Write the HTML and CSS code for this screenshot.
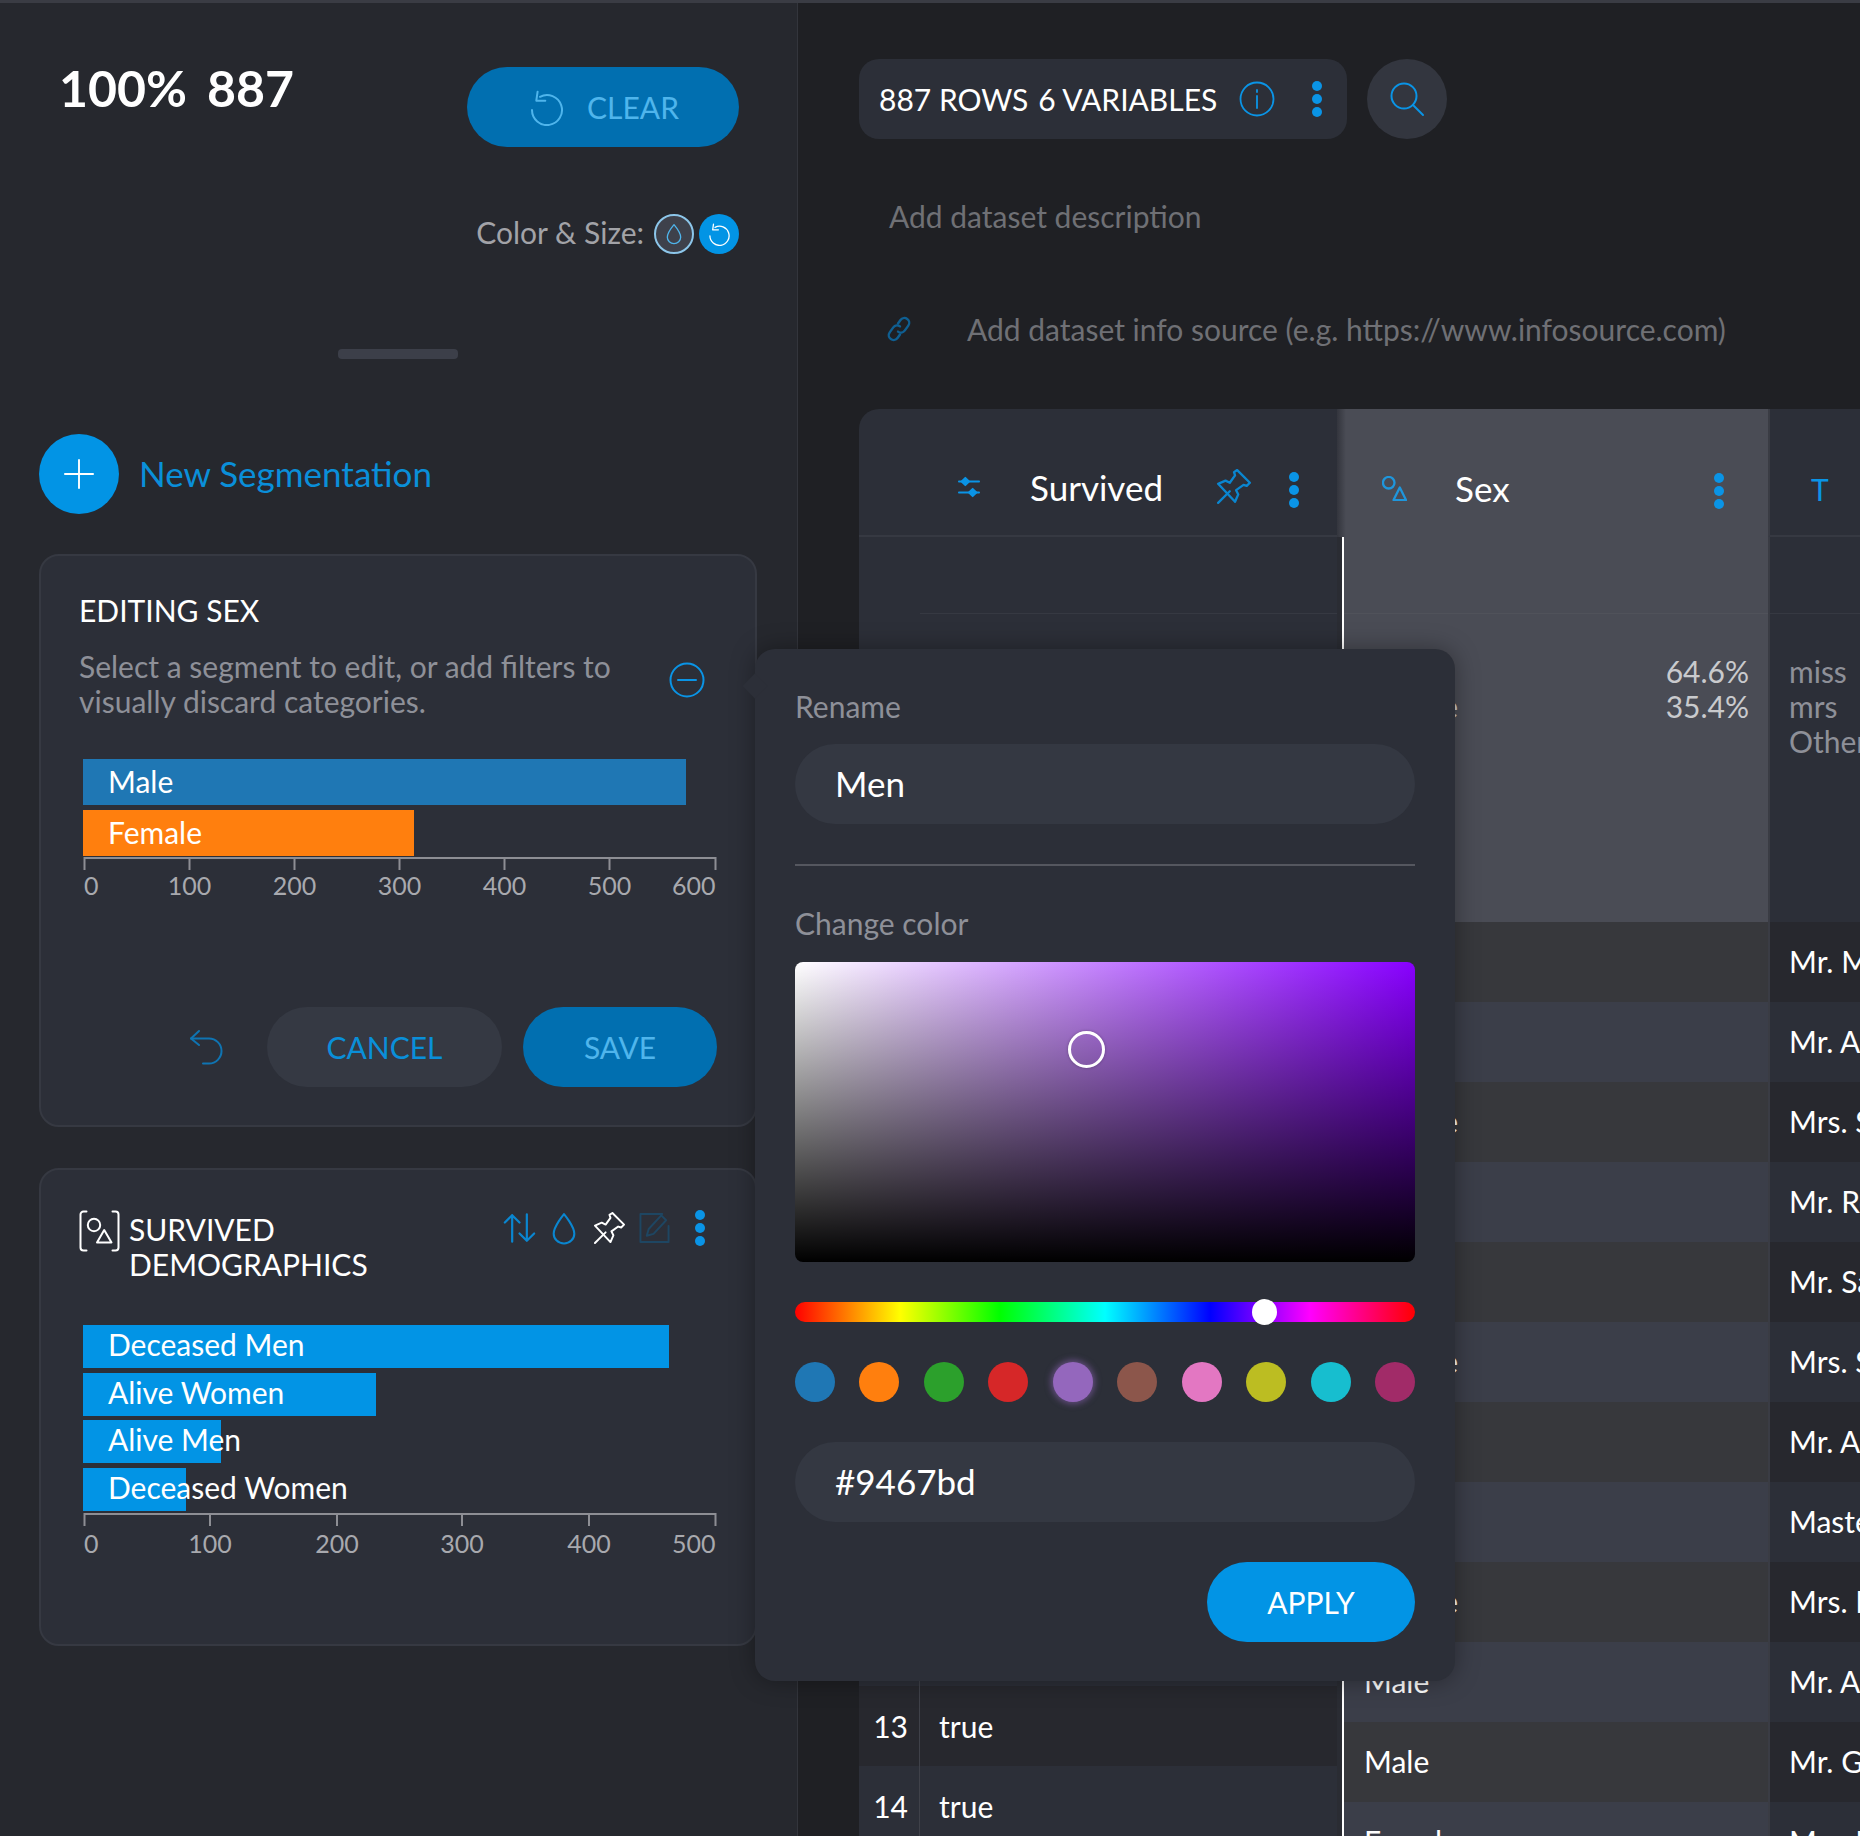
FILE: index.html
```html
<!DOCTYPE html>
<html lang="en">
<head>
<meta charset="utf-8">
<title>Dataset segmentation</title>
<link rel="stylesheet" href="styles.css">
</head>
<body>
<svg class="sprite" xmlns="http://www.w3.org/2000/svg">
  <symbol id="reset" viewBox="0 0 36 36"><path d="M11 6.800A15 15 0 1 1 3 20"/><path d="M8.600 1.700 7.300 10.700H16.300"/></symbol>
  <symbol id="undo" viewBox="0 0 36 36"><path d="M10 2 2 9.500 10 16"/><path d="M2 9.500h18a12.500 12.500 0 0 1 0 25h-6"/></symbol>
  <symbol id="drop" viewBox="0 0 24 32"><path d="M12 2C12 2 2 14 2 21a10 9.500 0 0 0 20 0C22 14 12 2 12 2Z"/></symbol>
  <symbol id="plus" viewBox="0 0 32 32"><path d="M16 1v30M1 16h30"/></symbol>
  <symbol id="minus" viewBox="0 0 36 36"><circle cx="18" cy="18" r="16.500"/><path d="M9 18h18"/></symbol>
  <symbol id="info" viewBox="0 0 36 36"><circle cx="18" cy="18" r="16.500"/><path d="M18 15v12M18 9v2"/></symbol>
  <symbol id="search" viewBox="0 0 36 36"><circle cx="15" cy="15" r="12.500"/><path d="m24 24 10 10"/></symbol>
  <symbol id="link" viewBox="0 0 24 28"><path d="M11 8.500 13.500 5a4.800 4.800 0 0 1 7.800 5.600l-3.600 5a4.800 4.800 0 0 1-6.700 1"/><path d="M13 19.500 10.500 23a4.800 4.800 0 0 1-7.800-5.600l3.600-5a4.800 4.800 0 0 1 6.700-1"/></symbol>
  <symbol id="pin" viewBox="0 0 34 34"><path d="M2 32 13 21"/><path d="M2 14 9 11l4 2 5-7-1-3 3-2 12 12-3 3-3-1-7 5 2 4-3 7Z"/></symbol>
  <symbol id="sort" viewBox="0 0 36 32"><path d="M10 31V2M2 10l8-8 8 8"/><path d="M26 1v29M18 22l8 8 8-8"/></symbol>
  <symbol id="edit" viewBox="0 0 32 32"><path d="M24 1.500H1.500v29h29V14"/><path d="M8 24l2-7L23 3l5 5-13 14Z"/></symbol>
  <symbol id="dots" viewBox="0 0 10 36"><circle cx="5" cy="5" r="5"/><circle cx="5" cy="18" r="5"/><circle cx="5" cy="31" r="5"/></symbol>
  <symbol id="sliders" viewBox="0 0 24 24"><path d="M1 6h22M1 18h22"/><path class="solid" d="m8 2 4 4-4 4-4-4ZM16 14l4 4-4 4-4-4Z"/></symbol>
  <symbol id="shapes" viewBox="0 0 26 26"><circle cx="7" cy="7" r="6"/><path d="M18.500 12 25 25H12Z"/></symbol>
  <symbol id="bracket" viewBox="0 0 40 42"><path d="M7 1.500H4a3 3 0 0 0-3 3v33a3 3 0 0 0 3 3h3M33 1.500h3a3 3 0 0 1 3 3v33a3 3 0 0 1-3 3h-3"/><circle cx="14.500" cy="15" r="6.200"/><path d="M24.700 20 32 32.500H17.500Z"/></symbol>
</svg>

<div class="app">
  <aside class="left">
    <div class="summary">
      <div class="count"><span>100%</span><span>887</span></div>
      <button class="btn btn-dim clear"><svg class="ic ic-reset"><use href="#reset"/></svg>CLEAR</button>
    </div>

    <div class="color-size">
      <span class="color-label">Color &amp; Size:</span>
      <span class="round round-drop"><svg class="ic ic-drop-sm"><use href="#drop"/></svg></span>
      <span class="round round-reset"><svg class="ic ic-reset-sm"><use href="#reset"/></svg></span>
    </div>

    <div class="handle"></div>

    <div class="new-seg">
      <span class="plus"><svg class="ic ic-plus"><use href="#plus"/></svg></span>
      <span class="new-seg-label">New Segmentation</span>
    </div>

    <section class="card card-edit">
      <h2 class="card-title">EDITING SEX</h2>
      <div class="desc-row">
        <p class="desc">Select a segment to edit, or add filters to<br>visually discard categories.</p>
        <svg class="ic ic-minus"><use href="#minus"/></svg>
      </div>
      <div class="chart chart-edit">
        <div class="bar bar-edit bar-male" style="width:603px">Male</div>
        <div class="bar bar-edit bar-female" style="width:331px">Female</div>
        <svg class="axis" width="640" height="64" viewBox="0 0 640 64">
          <path class="axis-line" d="M1.500 14V2H632.500V14M106.500 2V14M211.500 2V14M316.500 2V14M421.500 2V14M526.500 2V14"/>
          <text x="1" y="39">0</text>
          <text class="mid" x="106.500" y="39">100</text>
          <text class="mid" x="211.500" y="39">200</text>
          <text class="mid" x="316.500" y="39">300</text>
          <text class="mid" x="421.500" y="39">400</text>
          <text class="mid" x="526.500" y="39">500</text>
          <text class="end" x="632.500" y="39">600</text>
        </svg>
      </div>
      <div class="actions">
        <svg class="ic ic-undo"><use href="#undo"/></svg>
        <button class="btn btn-quiet cancel">CANCEL</button>
        <button class="btn btn-dim save">SAVE</button>
      </div>
    </section>

    <section class="card card-demo">
      <div class="demo-head">
        <svg class="ic ic-bracket"><use href="#bracket"/></svg>
        <h2 class="card-title demo-title">SURVIVED<br>DEMOGRAPHICS</h2>
        <div class="demo-tools">
          <svg class="ic ic-sort"><use href="#sort"/></svg>
          <svg class="ic ic-drop"><use href="#drop"/></svg>
          <svg class="ic ic-pin-w"><use href="#pin"/></svg>
          <svg class="ic ic-edit"><use href="#edit"/></svg>
          <svg class="ic ic-dots"><use href="#dots"/></svg>
        </div>
      </div>
      <div class="chart chart-demo">
        <div class="bar bar-demo" style="width:586px">Deceased Men</div>
        <div class="bar bar-demo" style="width:293px">Alive Women</div>
        <div class="bar bar-demo" style="width:138px">Alive Men</div>
        <div class="bar bar-demo" style="width:103px">Deceased Women</div>
        <svg class="axis" width="640" height="60" viewBox="0 0 640 60">
          <path class="axis-line" d="M1.500 15V3H632.500V15M127 3V15M254 3V15M379 3V15M506 3V15"/>
          <text x="1" y="42">0</text>
          <text class="mid" x="127" y="42">100</text>
          <text class="mid" x="254" y="42">200</text>
          <text class="mid" x="379" y="42">300</text>
          <text class="mid" x="506" y="42">400</text>
          <text class="end" x="632.500" y="42">500</text>
        </svg>
      </div>
    </section>
  </aside>

  <main class="right">
    <div class="topbar">
      <div class="chip">
        <span>887 ROWS</span><span>6 VARIABLES</span>
        <svg class="ic ic-info"><use href="#info"/></svg>
        <svg class="ic ic-dots chip-dots"><use href="#dots"/></svg>
      </div>
      <span class="search"><svg class="ic ic-search"><use href="#search"/></svg></span>
    </div>
    <p class="meta meta-desc">Add dataset description</p>
    <div class="meta meta-source"><svg class="ic ic-link"><use href="#link"/></svg><span>Add dataset info source (e.g. https://www.infosource.com)</span></div>

    <div class="table">
      <div class="col col-a">
        <div class="head head-a">
          <svg class="ic ic-sliders"><use href="#sliders"/></svg>
          <span class="head-name">Survived</span>
          <svg class="ic ic-pin"><use href="#pin"/></svg>
          <svg class="ic ic-dots"><use href="#dots"/></svg>
        </div>
        <div class="stats stats-a"><div class="stats-gap"></div></div>
        <div class="row"><span class="idx">1</span><span>false</span></div>
        <div class="row"><span class="idx">2</span><span>true</span></div>
        <div class="row"><span class="idx">3</span><span>true</span></div>
        <div class="row"><span class="idx">4</span><span>true</span></div>
        <div class="row"><span class="idx">5</span><span>false</span></div>
        <div class="row"><span class="idx">6</span><span>false</span></div>
        <div class="row"><span class="idx">7</span><span>false</span></div>
        <div class="row"><span class="idx">8</span><span>false</span></div>
        <div class="row"><span class="idx">9</span><span>true</span></div>
        <div class="row"><span class="idx">10</span><span>true</span></div>
        <div class="row"><span class="idx">11</span><span>true</span></div>
        <div class="row"><span class="idx">12</span><span>true</span></div>
        <div class="row"><span class="idx">13</span><span>true</span></div>
        <div class="row"><span class="idx">14</span><span>true</span></div>
      </div>

      <div class="col col-sex">
        <div class="head head-sex">
          <svg class="ic ic-shapes"><use href="#shapes"/></svg>
          <span class="head-name">Sex</span>
          <svg class="ic ic-dots"><use href="#dots"/></svg>
        </div>
        <div class="sex-body">
          <div class="stats stats-sex">
            <div class="stats-gap"></div>
            <div class="freq"><span>Male</span><span>64.6%</span></div>
            <div class="freq"><span>Female</span><span>35.4%</span></div>
          </div>
          <div class="row">Male</div>
          <div class="row">Male</div>
          <div class="row">Female</div>
          <div class="row">Male</div>
          <div class="row">Male</div>
          <div class="row">Female</div>
          <div class="row">Male</div>
          <div class="row">Male</div>
          <div class="row">Female</div>
          <div class="row">Male</div>
          <div class="row">Male</div>
          <div class="row">Female</div>
        </div>
      </div>

      <div class="col col-title">
        <div class="head head-title"><span class="type-t">T</span></div>
        <div class="stats stats-title">
          <div class="stats-gap"></div>
          <div class="freq">miss</div>
          <div class="freq">mrs</div>
          <div class="freq">Other</div>
        </div>
        <div class="row">Mr. Michael</div>
        <div class="row">Mr. Anders</div>
        <div class="row">Mrs. Sarah</div>
        <div class="row">Mr. Robert</div>
        <div class="row">Mr. Samuel</div>
        <div class="row">Mrs. Susan</div>
        <div class="row">Mr. Arthur</div>
        <div class="row">Master</div>
        <div class="row">Mrs. Ida</div>
        <div class="row">Mr. Albert</div>
        <div class="row">Mr. George</div>
        <div class="row">Mrs. Mary</div>
      </div>
    </div>
  </main>

  <div class="popover">
    <label class="pop-label">Rename</label>
    <div class="field field-name">Men</div>
    <hr class="pop-rule">
    <label class="pop-label">Change color</label>
    <div class="picker"><span class="picker-cursor"></span></div>
    <div class="hue"><span class="hue-thumb"></span></div>
    <div class="swatches">
      <span class="sw sw-1"></span><span class="sw sw-2"></span><span class="sw sw-3"></span><span class="sw sw-4"></span><span class="sw sw-5"></span><span class="sw sw-6"></span><span class="sw sw-7"></span><span class="sw sw-8"></span><span class="sw sw-9"></span><span class="sw sw-10"></span>
    </div>
    <div class="field field-hex">#9467bd</div>
    <div class="pop-actions"><button class="btn btn-primary apply">APPLY</button></div>
  </div>
</div>
</body>
</html>
```

FILE: styles.css
```css
* { box-sizing: border-box; }
html, body { margin: 0; height: 100%; }
body {
  width: 1860px;
  height: 1836px;
  overflow: hidden;
  background: #1f2024;
  color: #fff;
  font-family: Lato, "Open Sans", sans-serif;
  font-size: 30px;
}
.sprite { display: none; }
.ic { display: block; flex: none; fill: none; stroke: currentColor; stroke-width: 2; stroke-linecap: round; stroke-linejoin: round; }
h2, p { margin: 0; font-weight: 400; }
button { font: inherit; border: 0; cursor: pointer; }

.app { position: relative; display: flex; height: 1836px; border-top: 3px solid #3a3c44; overflow: hidden; }

/* left panel */
.left { flex: none; width: 798px; padding: 64px 41px 0 39px; background: #26282e; border-right: 1px solid #33353c; }
.summary { display: flex; justify-content: space-between; align-items: flex-start; padding: 0 17px 0 20px; }
.count { display: flex; gap: 20px; margin-top: -1px; font-size: 50px; font-weight: 700; line-height: 44px; }
.btn { display: flex; align-items: center; justify-content: center; height: 80px; padding-bottom: 2px; border-radius: 40px; font-size: 30px; }
.btn-dim { background: #016fb0; color: #4fb5ec; }
.btn-quiet { background: #353943; color: #0a8fd9; }
.btn-primary { background: #0294e5; color: #fff; }
.clear { width: 272px; gap: 22px; }
.ic-reset { width: 36px; height: 36px; margin: 2px 0 0 2px; }

.color-size { display: flex; align-items: center; justify-content: flex-end; gap: 5px; margin-top: 67px; padding-right: 17px; color: #a2a3a8; }
.color-label { margin: 0 5px 5px 0; line-height: 30px; }
.round { display: flex; align-items: center; justify-content: center; width: 40px; height: 40px; border-radius: 50%; }
.round-drop { background: #3e414b; border: 2px solid #8cc6ea; color: #4fb5ec; }
.round-reset { background: #0294e5; color: #fff; }
.ic-drop-sm { width: 16px; height: 22px; }
.ic-reset-sm { width: 23px; height: 23px; }

.handle { width: 120px; height: 10px; margin: 95px auto 0; border-radius: 4px; background: #3c3f49; }

.new-seg { display: flex; align-items: center; gap: 20px; margin-top: 75px; color: #0a8fd9; font-size: 35px; }
.new-seg-label { margin-bottom: 2px; }
.plus { display: flex; align-items: center; justify-content: center; width: 80px; height: 80px; border-radius: 50%; background: #0294e5; color: #fff; }
.ic-plus { width: 30px; height: 30px; }

.card { width: 718px; background: #2c2f38; border: 2px solid #363942; border-radius: 20px; padding: 0 38px; }
.card-edit { height: 573px; margin-top: 40px; padding-top: 37px; }
.card-demo { height: 478px; margin-top: 41px; padding-top: 42px; }
.card-title { font-size: 30px; line-height: 35px; }
.desc-row { display: flex; justify-content: space-between; align-items: flex-start; margin-top: 21px; padding-right: 12px; }
.desc { color: #8e9098; line-height: 35px; }
.ic-minus { width: 36px; height: 36px; margin-top: 13px; color: #0a94e6; }

.chart { margin-left: 4px; }
.chart-edit { margin-top: 40px; }
.chart-demo { margin-top: 43px; }
.bar { display: flex; align-items: center; padding-left: 25px; white-space: nowrap; color: #fff; }
.bar-edit { height: 46px; margin-bottom: 5px; padding-bottom: 2px; }
.bar-male { background: #1f77b4; }
.bar-female { background: #ff7f0e; margin-bottom: 0; }
.bar-demo { height: 43px; margin-bottom: 4.670px; padding-bottom: 5px; background: #0294e5; }
.bar-demo:nth-child(4) { margin-bottom: 0; }
.axis { display: block; }
.axis text { fill: #a8a9ae; font-family: Lato, sans-serif; font-size: 25px; }
.axis .mid { text-anchor: middle; }
.axis .end { text-anchor: end; }
.axis-line { fill: none; stroke: #8d8e94; stroke-width: 2; }

.actions { display: flex; align-items: center; justify-content: flex-end; margin-top: 87px; }
.ic-undo { width: 36px; height: 36px; margin-right: 42px; color: #0f74b2; }
.cancel { width: 235px; margin-right: 21px; }
.save { width: 194px; }

.demo-head { display: flex; align-items: flex-start; }
.ic-bracket { width: 41px; height: 42px; margin: -2px 9px 0 0; }
.demo-title { flex: 1; }
.demo-tools { display: flex; align-items: center; margin-top: -2px; padding-right: 12px; color: #0a86d0; }
.ic-sort { width: 33px; height: 32px; stroke-width: 2.400; }
.ic-drop { width: 26px; height: 33px; margin-left: 15px; }
.ic-pin-w { width: 33px; height: 33px; margin-left: 16px; color: #fff; }
.ic-edit { width: 31px; height: 32px; margin-left: 13px; color: #1e4662; }
.ic-dots { width: 10px; height: 36px; fill: #0a94e6; stroke: none; }
.demo-tools .ic-dots { margin-left: 25px; }

/* right panel */
.right { flex: 1; min-width: 0; padding: 56px 0 0 61px; overflow: hidden; }
.topbar { display: flex; gap: 20px; }
.chip { display: flex; align-items: center; width: 488px; height: 80px; padding: 0 0 0 20px; border-radius: 20px; background: #2c2f38; }
.chip span + span { margin-left: 10px; }
.ic-info { width: 36px; height: 36px; margin-left: 22px; color: #0a94e6; stroke-width: 1.800; }
.chip-dots { margin-left: 37px; }
.search { display: flex; align-items: center; justify-content: center; width: 80px; height: 80px; border-radius: 50%; background: #33363f; }
.ic-search { width: 36px; height: 36px; color: #0a94e6; }
.meta { color: #6f7075; line-height: 36px; }
.meta-desc { margin-top: 59px; padding-left: 30px; }
.meta-source { display: flex; align-items: center; margin-top: 77px; padding-left: 28px; }
.ic-link { width: 24px; height: 28px; margin-right: 56px; color: #0f5f92; stroke-width: 2.400; }

.table { display: flex; width: 1010px; margin-top: 62px; }
.col { flex: none; }
.col-a { width: 478px; background: #2c2f38; border-top-left-radius: 20px; }
.col-sex { width: 431px; background: #2a2c33; }
.col-title { width: 302px; background: #2c2f38; }
.head { display: flex; align-items: center; height: 128px; padding-top: 30px; }
.head-name { font-size: 35px; }
.head-a { border-bottom: 2px solid #363942; padding-left: 99px; }
.ic-sliders { width: 22px; height: 22px; color: #0a94e6; }
.solid { fill: currentColor; }
.head-a .head-name { margin-left: 50px; width: 186px; }
.ic-pin { width: 36px; height: 36px; color: #0a86d0; stroke-width: 2.200; }
.head-a .ic-dots { margin: 6px 0 0 37px; }
.head-sex { padding-left: 45px; background: linear-gradient(to right, #33353d, #4a4c55 9px); }
.head-sex .ic-dots { margin-top: 6px; }
.ic-shapes { width: 25px; height: 25px; color: #1f96dc; stroke-width: 2.400; }
.head-sex .head-name { margin-left: 48px; width: 259px; }
.head-title { padding-left: 41px; border-left: 2px solid #3a3c44; border-bottom: 2px solid #363942; }
.type-t { margin-top: 4px; color: #0a94e6; }

.stats-gap { height: 77px; border-bottom: 1px solid #363942; margin-bottom: 40px; }
.stats-a { height: 189px; padding-left: 61px; }
.sex-body { margin-left: 5px; border-left: 2px solid #fff; }
.stats-sex { height: 385px; background: #4a4c55; }
.stats-sex .stats-gap { border-color: #50525a; }
.stats-title { height: 385px; border-left: 2px solid #3a3c44; }
.freq { display: flex; justify-content: space-between; line-height: 35px; color: #8e9098; padding: 0 19px 0 20px; }
.stats-title .freq { padding: 0 19px; white-space: nowrap; }
.stats-sex .freq { color: #c9cacd; }

.row { display: flex; align-items: center; height: 80px; white-space: nowrap; }
.col-a .row:nth-child(even) { background: #2c2f38; }
.col-a .row:nth-child(odd) { background: #27282e; }
.idx { width: 61px; height: 100%; line-height: 80px; padding-right: 11px; margin-right: 19px; text-align: right; border-right: 1px solid #3f4149; }
.sex-body .row { padding: 0 0 2px 20px; background: #3b3e49; }
.sex-body .row:nth-child(even) { background: #37383c; }
.col-title .row { padding: 0 0 2px 19px; background: #2c2f38; border-left: 2px solid #3a3c44; }
.col-title .row:nth-child(odd) { background: #27282e; }

/* popover */
.popover {
  position: absolute;
  left: 755px;
  top: 646px;
  width: 700px;
  height: 1032px;
  padding: 39px 40px 0;
  border-radius: 20px;
  background: #2c2f38;
  box-shadow: 0 0 24px rgba(0,0,0,.35);
}
.popover::before {
  content: "";
  position: absolute;
  left: -9px;
  top: 28px;
  width: 18px;
  height: 18px;
  background: #2c2f38;
  transform: rotate(45deg);
}
.pop-label { display: block; line-height: 36px; color: #8e9098; }
.field { display: flex; align-items: center; width: 100%; height: 80px; padding: 0 0 2px 40px; border-radius: 40px; background: #343842; font-size: 35px; }
.field-name { margin-top: 20px; }
.pop-rule { height: 2px; margin: 40px 0 39px; border: 0; background: #55575f; }
.picker {
  position: relative;
  height: 300px;
  margin-top: 21px;
  border-radius: 8px;
  background:
    linear-gradient(to top, #000, rgba(0,0,0,0)),
    linear-gradient(to right, #fff, #8800ff);
}
.picker-cursor {
  position: absolute;
  left: 273px;
  top: 69px;
  width: 37px;
  height: 37px;
  border: 3px solid #fff;
  border-radius: 50%;
  box-shadow: 0 0 3px rgba(0,0,0,.3);
}
.hue {
  position: relative;
  height: 20px;
  margin-top: 40px;
  border-radius: 10px;
  background: linear-gradient(to right, #f00 0%, #ff0 17%, #0f0 33%, #0ff 50%, #00f 67%, #f0f 83%, #f00 100%);
}
.hue-thumb { position: absolute; left: 457px; top: -3px; width: 25px; height: 26px; border-radius: 50%; background: #fff; }
.swatches { display: flex; justify-content: space-between; margin-top: 40px; }
.sw { width: 40px; height: 40px; border-radius: 50%; }
.sw-1 { background: #1f77b4; }
.sw-2 { background: #ff7f0e; }
.sw-3 { background: #2ca02c; }
.sw-4 { background: #d62728; }
.sw-5 { background: #9467bd; box-shadow: 0 0 6px 2px rgba(148,103,189,.55); }
.sw-6 { background: #8c564b; }
.sw-7 { background: #e377c2; }
.sw-8 { background: #bcbd22; }
.sw-9 { background: #17becf; }
.sw-10 { background: #a12b68; }
.field-hex { margin-top: 40px; }
.pop-actions { display: flex; justify-content: flex-end; margin-top: 40px; }
.apply { width: 208px; }
```
